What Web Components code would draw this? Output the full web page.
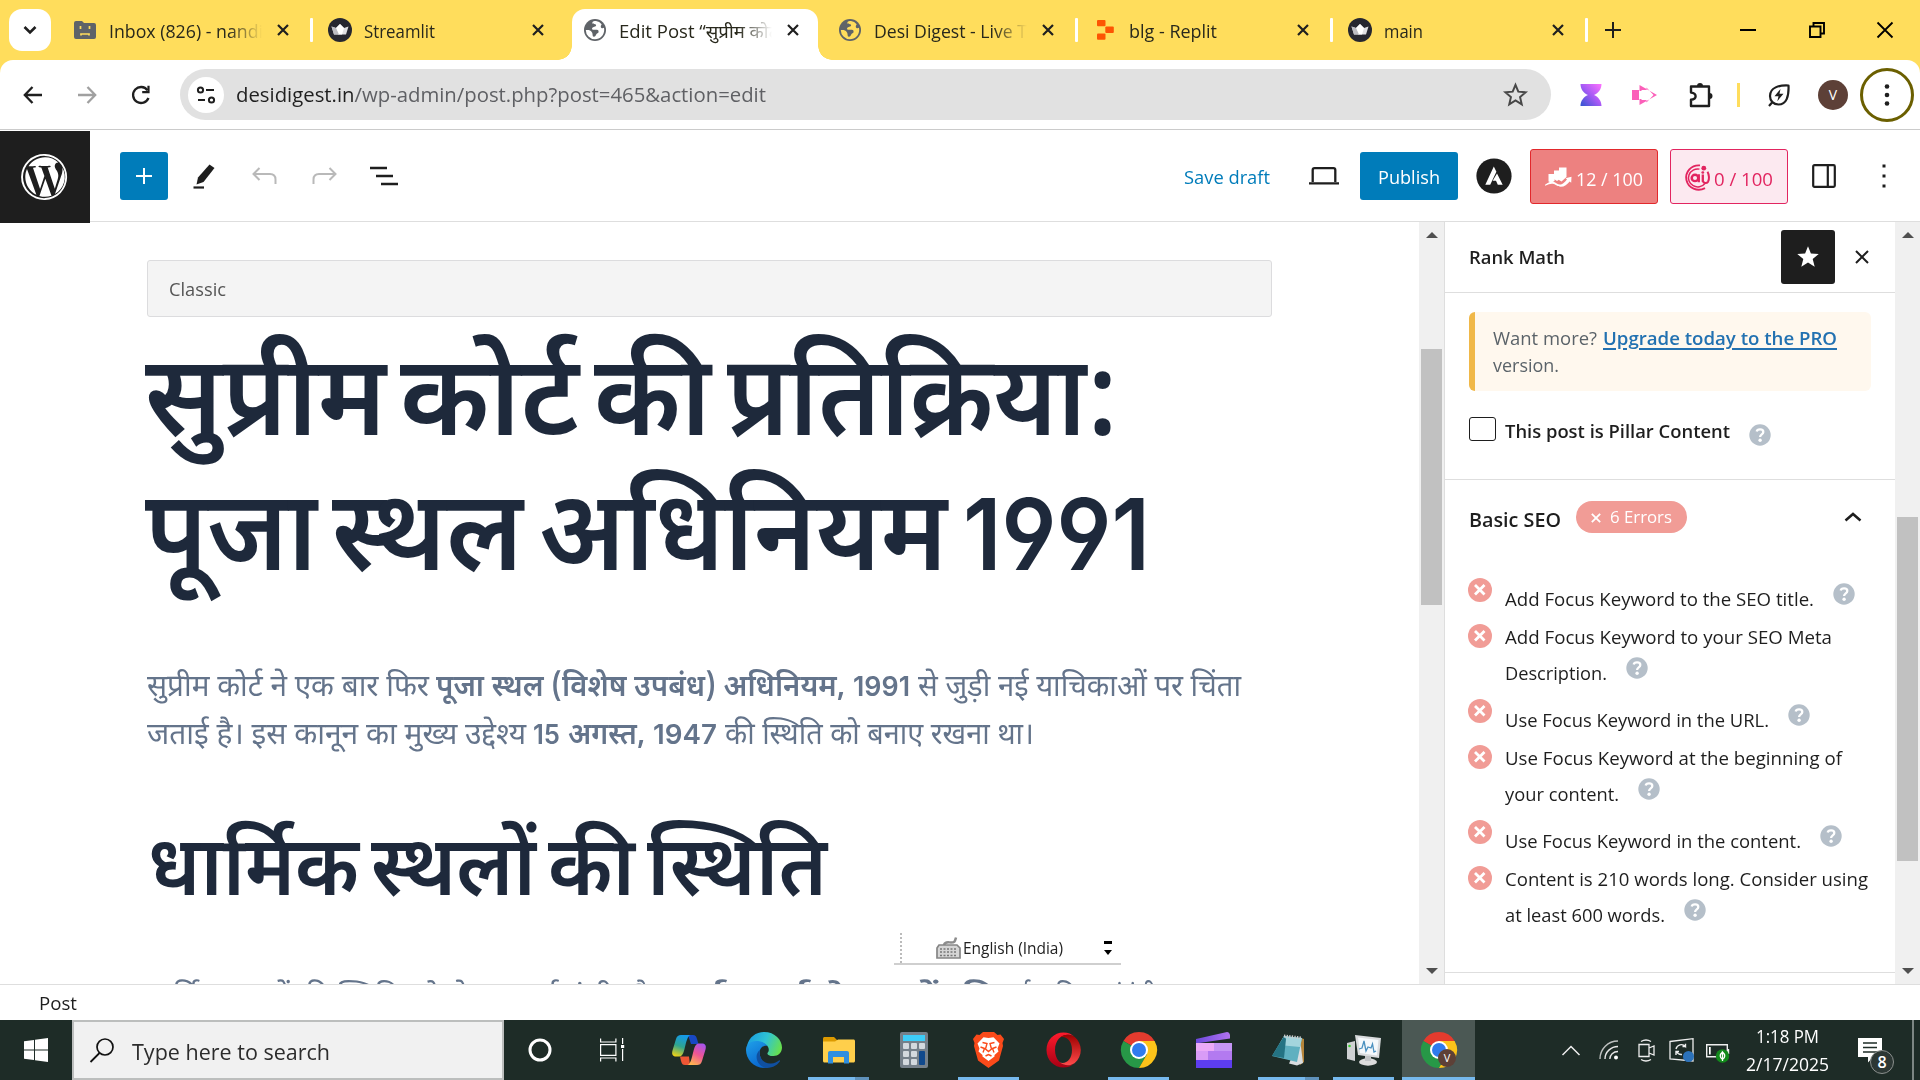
<!DOCTYPE html>
<html lang="en"><head><meta charset="utf-8"><title>Edit Post</title>
<style>
html,body{margin:0;height:100%;overflow:hidden;background:#fff}
body{font-family:"Open Sans","Noto Sans","Noto Sans Devanagari",sans-serif;color:#1e1e1e}
</style></head><body>
<desk-top></desk-top>
<script>
const ICONS={
chev:['0 0 16 16','<path d="M2.500 5l5.500 5.500L13.500 5" fill="none" stroke="#1f1f1f" stroke-width="2.600"/>'],
folder:['0 0 22 18','<path d="M0 2a2 2 0 0 1 2-2h6l2 2h10a2 2 0 0 1 2 2v12a2 2 0 0 1-2 2H2a2 2 0 0 1-2-2z" fill="#5f6368"/><path d="M6.500 5v3M15.500 5v3M7 14.500v-1.500h8v1.500" fill="none" stroke="#ffdd5c" stroke-width="1.700"/>'],
x:['0 0 12 12','<path d="M1 1l10 10M11 1L1 11" stroke="currentColor" stroke-width="2.200"/>'],
thinx:['0 0 14 14','<path d="M1 1l12 12M13 1L1 13" stroke="currentColor" stroke-width="2"/>'],
crown:['0 0 24 24','<circle cx="12" cy="12" r="12" fill="#262730"/><path d="M3.500 8.500L8 10l4-4 4 4 4.500-1.500L18 16.500H6z" fill="#e0e0e3"/><path d="M12 6l4 4-2 6.500h-4L8 10z" fill="#fff"/><path d="M3.500 8.500L8 10l3 6.500H6z" fill="#bcbcc2"/>'],
globe:['0 0 24 24','<circle cx="12" cy="12" r="11" fill="#5f6368"/><path d="M13 3c-1.500 0-3.500.3-3.700 1.700-.2 1.300 1.500 1.300 3 1.500 1.300.3 1 1.600-.1 2.200-1.100.6-3.200.6-3.200 2 0 1.300 1.200 1.300 2.500 1.300h2.300c1.700 0 2 1.300 1.700 2.600-.3 1.200-1.800 1-2.300 2.200-.5 1.100-1 2.500-2.500 2.300-1.600-.3-.8-2.500-1.400-3.900-.6-1.300-2-2.600-3.500-2.900-1.200-.2-2.200-.1-3 0a9.300 9.300 0 0 0 9.200 9.300c5.200 0 9.200-4.200 9.200-9.300 0-.8-.1-1.500-.3-2.200-1 .6-2.500.6-3-.6-.4-1 .2-2 .8-2.900A9.200 9.200 0 0 0 13 3z" fill="var(--bg,#fff)"/>'],
replit:['0 0 17 20','<g fill="#fd5402"><rect width="8.500" height="6.300" rx="1"/><rect x="8.300" y="6.500" width="8.500" height="6.500" rx="1"/><rect y="13.400" width="8.500" height="6.300" rx="1"/></g>'],
plus:['0 0 16 16','<path d="M8 0v16M0 8h16" stroke="currentColor" stroke-width="2"/>'],
min:['0 0 16 16','<path d="M0 8h16" stroke="#000" stroke-width="2"/>'],
restore:['0 0 16 16','<path d="M1 4.500h10.500V15H1zM4.500 4.500V1H15v10.500h-3.500" fill="none" stroke="#000" stroke-width="1.900"/>'],
wx:['0 0 16 16','<path d="M.5.500l15 15M15.500.500l-15 15" stroke="#000" stroke-width="1.800"/>'],
back:['0 0 20 20','<path d="M19 10H2M9.500 2L1.800 10l7.700 8" fill="none" stroke="currentColor" stroke-width="2.300"/>'],
reload:['0 0 20 20','<path d="M17.500 13A8 8 0 1 1 16.500 5.200" fill="none" stroke="#1f1f1f" stroke-width="2.300"/><path d="M18.600.8v7.400h-7.400V6h5.200V.8z" fill="#1f1f1f"/>'],
tune:['0 0 20 20','<g fill="none" stroke="#1f1f1f" stroke-width="2"><circle cx="4.500" cy="5" r="2.600"/><path d="M10 5h8M2 15h7"/><circle cx="15.500" cy="15" r="2.600"/></g>'],
star:['0 0 24 24','<path d="M12 2.800l2.700 6.500 7 .6-5.300 4.600 1.600 6.900-6-3.700-6 3.700 1.600-6.900-5.300-4.600 7-.6z" fill="none" stroke="#474747" stroke-width="1.900"/>'],
hour:['0 0 22 22','<defs><linearGradient id="a" x1="1" y1="0" x2="0" y2="1"><stop offset="0" stop-color="#ff72ff"/><stop offset=".5" stop-color="#a65af5"/><stop offset="1" stop-color="#3055d0"/></linearGradient></defs><path d="M.5 0h21c0 5-3 9-7.500 11 4.500 2 7.500 6 7.500 11H.5c0-5 3-9 7.500-11C3.500 9 .5 5 .5 0z" fill="url(#a)"/>'],
pinkp:['0 0 25 20','<path d="M0 5h7v10H0z" fill="#fb5fb9"/><path d="M7.500 6V0L25 10 7.500 20v-6l2 0v1h5v2.500l7-7.500-7-7.500V5h-5v1z" fill="#fb5fb9"/>'],
puzzle:['0 0 26 26','<path d="M4 4.500h18V24H4v-6.200c3.700-.4 4.600-1.900 4.600-3.600S7.700 11 4 10.600z" fill="none" stroke="#1f1f1f" stroke-width="2.400" stroke-linejoin="round"/><path d="M10 4a3 3 0 0 1 6 0zM22.500 11a3 3 0 0 1 0 6z" fill="#1f1f1f"/>'],
leaf:['0 0 24 24','<path d="M21.500 2.500C12 2 3 4.500 3 13c0 5 3.500 8.500 8.500 8.500 8 0 10.500-8 10-19zM2 23l3.500-4" fill="none" stroke="#1f1f1f" stroke-width="2.200" stroke-linejoin="round"/><path d="M13.500 6l-6 7.200h4l-1.200 5 6.200-7.400h-4z" fill="#1f1f1f"/>'],
dots:['0 0 6 24','<g fill="currentColor"><circle cx="3" cy="3.500" r="2.300"/><circle cx="3" cy="12" r="2.300"/><circle cx="3" cy="20.500" r="2.300"/></g>'],
wp:['0 0 122.500 122.500','<g fill="#fff"><path d="M8.700 61.300c0 20.800 12.100 38.700 29.600 47.300l-25-68.700c-3 6.500-4.600 13.700-4.600 21.400zM96.700 58.600c0-6.500-2.300-11-4.300-14.500-2.700-4.300-5.200-8-5.200-12.300 0-4.800 3.700-9.300 8.900-9.300h.7a52.400 52.400 0 0 0-35.500-13.800c-18.400 0-34.500 9.400-43.900 23.700 1.200 0 2.400.1 3.400.1 5.500 0 14-.7 14-.7 2.900-.2 3.200 4 .4 4.300 0 0-2.900.3-6 .5L48.100 93l11.500-34.500-8.200-22.400c-2.800-.2-5.500-.5-5.500-.5-2.800-.2-2.500-4.500.3-4.300 0 0 8.700.7 13.900.7 5.500 0 14-.7 14-.7 2.800-.2 3.200 4 .3 4.300 0 0-2.800.3-6 .5l19 56.500 5.200-17.500c2.300-7.200 4-12.400 4-16.800zM62.200 65.900l-15.800 45.800a52.600 52.600 0 0 0 32.300-.8l-.4-.7zM107.400 36c.2 1.700.4 3.500.4 5.400 0 5.300-1 11.300-4 18.800l-16 46.500a52.500 52.500 0 0 0 19.600-70.700z"/><path d="M61.300 0a61.300 61.300 0 1 0 0 122.500 61.300 61.300 0 0 0 0-122.500zm0 117.500a56.300 56.300 0 1 1 0-112.500 56.300 56.300 0 0 1 0 112.500z"/></g>'],
pencil:['0 0 22 25','<path d="M16.500.5l5 3.500L10.500 18 3.500 20.500 5 13.500z" fill="#1e1e1e"/><path d="M.5 23.500h10.500" stroke="#1e1e1e" stroke-width="2.200"/>'],
undo:['0 0 25 18','<path d="M7.500 1L1.500 7l6 6M1.500 7H18c3.500 0 5.500 2 5.500 5.500V17" fill="none" stroke="#b9b9b9" stroke-width="2"/>'],
list:['0 0 28 20','<path d="M0 2h17M6 10h17M11 18h17" stroke="#1e1e1e" stroke-width="2.400"/>'],
laptop:['0 0 30 18','<path d="M3.700 15V3c0-1 .8-1.800 1.800-1.800h19c1 0 1.800.8 1.800 1.800v12M0 16.300h30" fill="none" stroke="#1e1e1e" stroke-width="2.300"/>'],
astra:['0 0 36 36','<circle cx="18" cy="18" r="17.600" fill="#1e1e1e"/><path d="M17.800 8.500l2.600 5.300-6.200 12.900H9.300zM21 15.500l5.700 11.200h-4.900l-1.800-4h-3.300z" fill="#fff"/>'],
rank:['0 0 27 20','<path d="M3.500 7h6v7l-3 1.500-3-1zM9 3.500h6V12l-3 2-3-2zM14 .5h7.500V10l-5 4.500-2.500-1.500z" fill="#fff"/><path d="M0 17.800c4.500-2.800 6-3.800 8.500-3 2.500.8 4 2.700 6.500 2.700 3 0 5-2.800 7-5.300l-1.500-1 6-1.500-.3 6-1.500-1.200c-2.500 3-5.200 5.300-9 5.300-3.500 0-4.500-2-7-2.700-2.500-.8-4.700.2-8.700 1.600z" fill="#fff"/>'],
aic:['0 0 26 28','<g fill="none" stroke="#e22560"><path d="M16 1.500A12.600 12.600 0 1 0 21 25" stroke-width="1.900"/><path d="M23.500 8c1.700 3 2 8 .5 10.500-1.500 2-4.500 1.500-5.200-1" stroke-width="2"/><path d="M15.500 5.300a9.300 9.300 0 1 0 5.500 15" stroke-width="1.500"/><circle cx="11" cy="14.500" r="3.300" stroke-width="2.500"/><path d="M14.800 10.500v8.300M18.800 11v7.500" stroke-width="2.300"/></g><circle cx="19.800" cy="4.300" r="2.400" fill="#e22560"/><circle cx="18.800" cy="8.800" r="1.400" fill="#e22560"/>'],
side:['0 0 24 24','<path d="M2.500 1.200h19c.8 0 1.300.5 1.300 1.300v19c0 .8-.5 1.300-1.300 1.300h-19c-.8 0-1.300-.5-1.300-1.300v-19c0-.8.5-1.300 1.300-1.300zM15.800 1v22" fill="none" stroke="#1e1e1e" stroke-width="2.200"/>'],
sdots:['0 0 4 24','<path d="M.5.500h3v3h-3zM.5 10.500h3v3h-3zM.5 20.500h3v3h-3z" fill="#1e1e1e"/>'],
fstar:['0 0 22 22','<path d="M11 .3l2.900 7.300 7.800.5-6 5 2 7.700-6.700-4.300-6.700 4.300 2-7.700-6-5 7.800-.5z" fill="#fff"/>'],
up:['0 0 18 10','<path d="M1.500 8.500L9 2l7.500 6.500" fill="none" stroke="#1e1e1e" stroke-width="2.500"/>'],
err:['0 0 24 24','<circle cx="12" cy="12" r="12" fill="#f19c96"/><path d="M7 7l9.500 9.500M16.500 7L7 16.500" stroke="#fff" stroke-width="2.800"/>'],
help:['0 0 22 22','<circle cx="11" cy="11" r="10.700" fill="#b5bfc9"/><path d="M7.700 7.500C8.200 4.800 14.300 4.600 14.300 8c0 2.400-3.200 2.300-3.200 4.900" fill="none" stroke="#fff" stroke-width="2.300"/><circle cx="11.100" cy="16.300" r="1.700" fill="#fff"/>'],
kb:['0 0 25 22','<path d="M8 8c1-4 5-2.500 7-2.500 4 0 4-1.500 5-5" fill="none" stroke="#8d8d8d" stroke-width="2.500"/><path d="M3 8h18l3 3v10H1V11z" fill="#d5d5d5" stroke="#858585" stroke-width="1.700"/><path d="M4 12h17M4 15h17M4 18.500h17" stroke="#777" stroke-width="1.700" stroke-dasharray="2 1.500"/>'],
win:['0 0 24 24','<path d="M0 3.300l10-1.400v9.600H0zM11 1.700L24 0v11.500H11zM0 12.500h10v9.600L0 20.700zM11 12.500h13V24l-13-1.700z" fill="#fff"/>'],
mag:['0 0 24 25','<circle cx="15" cy="9" r="8" fill="none" stroke="#111" stroke-width="1.700"/><path d="M9.500 15L.5 24" stroke="#111" stroke-width="1.800"/>'],
cort:['0 0 24 24','<circle cx="12" cy="12" r="10" fill="none" stroke="#fff" stroke-width="3"/>'],
tview:['0 0 25 24','<path d="M.6.500V4h15.300V.500M.6 23.500V20h15.300v3.500M.6 6.600h15.300v10.700H.600zM22.600 0v6M22.600 11v12" fill="none" stroke="#fff" stroke-width="1.200"/><path d="M21 7h3.200v3H21z" fill="#fff"/>'],
copilot:['0 0 34 30','<defs><linearGradient id="c1" x1=".5" y1="0" x2=".2" y2="1"><stop offset="0" stop-color="#159ae8"/><stop offset=".5" stop-color="#2fa58f"/><stop offset="1" stop-color="#f3d414"/></linearGradient><linearGradient id="c2" x1=".8" y1="0" x2=".3" y2="1"><stop offset="0" stop-color="#a654ef"/><stop offset=".5" stop-color="#ee5594"/><stop offset="1" stop-color="#ffb44f"/></linearGradient></defs><path d="M16 0h5c2.500 0 3 1 4 4l1.500 5H19z" fill="#1848c4"/><path d="M18 30h-5c-2.500 0-3-1-4-4l-1-4.500h9z" fill="#ee5634"/><path d="M9 0h9.500c-3 1-4 6-6 14-1.500 6-3 7.500-6 7.500H4c-3.500 0-4.500-2.500-3.500-6L4 4c1-3 2.500-4 5-4z" fill="url(#c1)"/><path d="M25 30h-9.500c3-1 4-6 6-14 1.500-6 3-7.500 6-7.500H30c3.500 0 4.500 2.500 3.500 6L30 26c-1 3-2.500 4-5 4z" fill="url(#c2)"/>'],
edge:['0 0 36 36','<defs><linearGradient id="e1" x1="0" y1=".3" x2="1" y2=".6"><stop offset="0" stop-color="#1a9ee0"/><stop offset=".5" stop-color="#2fc3d5"/><stop offset="1" stop-color="#68e04c"/></linearGradient><linearGradient id="e2" x1="0" y1="0" x2=".5" y2="1"><stop offset="0" stop-color="#1fa0e8"/><stop offset="1" stop-color="#0a68d0"/></linearGradient></defs><path d="M1 14C3 5 10 0 18 0c11 0 18 8 18 15.500 0 5-4 8.500-8.500 8.500-4 0-6.500-1.500-6-3 2-2 1.500-5.500-.5-7.500-4-3.500-14-3.500-20 .5z" fill="url(#e1)"/><path d="M0 18c0-5.500 4-9 10-9 5.500 0 9.500 2 11.500 5-3-1-6.500 1-7.500 4-1.500 6 2 13 8 17.500C9 38 0 28 0 18z" fill="url(#e2)"/><path d="M14 18c-2 7 3.500 14 11 13.500 3.500 0 6-1.500 8-3 .8-.5 1.300.2.800 1C30 34.500 25 36 19 36 10 33 8 22 14 18z" fill="#1050a0"/>'],
expl:['0 0 32 27','<path d="M0 1.500C0 .7.700 0 1.500 0H11l3 3v4H0z" fill="#dc9a00"/><path d="M0 4.500h12l3-2h15.500c.8 0 1.500.7 1.500 1.500v20c0 .8-.7 1.500-1.500 1.500h-29C.7 25.500 0 24.800 0 24z" fill="#ffcf4b"/><path d="M5 26.500V16c0-1.200.8-2 2-2h17c1.200 0 2 .8 2 2v10.500h-5V20h-11v6.500z" fill="#2f8fe0"/>'],
calc:['0 0 28 36','<rect width="28" height="36" rx="2" fill="#75808a"/><rect x="3" y="3" width="22" height="6" fill="#3dcdf8"/><g fill="#d3d9de"><rect x="3" y="11" width="6" height="6" rx="1"/><rect x="11" y="11" width="6" height="6" rx="1"/><rect x="19" y="11" width="6" height="6" rx="1"/><rect x="3" y="19" width="6" height="6" rx="1"/><rect x="11" y="19" width="6" height="6" rx="1"/><rect x="3" y="27" width="6" height="6" rx="1"/><rect x="11" y="27" width="6" height="6" rx="1"/></g><rect x="19" y="19" width="6" height="14" rx="1" fill="#10498c"/>'],
brave:['0 0 31 36','<path d="M10 0h11l3.500 3 3-.5L31 7l-1.500 4 .5 3-4 14.500L15.500 36 5 28.500 1 14l.5-3L0 7l3.500-4.500 3 .5z" fill="#fb4a1a"/><path d="M15.500 6l5-.8 6 6.300-2 5 1 3-4 3.500 0 1.500-6 4.500-6-4.500 0-1.500-4-3.500 1-3-2-5 6-6.300z" fill="#fff"/><path d="M9.500 10.500l4.500 1-1.500 5.500 3 2.500 3-2.500-1.500-5.500 4.500-1M7.500 15l4 1.500-1.500 4M23.500 15l-4 1.500 1.500 4M12.500 24l3-1.500 3 1.500" fill="none" stroke="#fb4a1a" stroke-width="1.400"/>'],
opera:['0 0 35 36','<defs><linearGradient id="o1" x1="0" y1="0" x2="0" y2="1"><stop offset="0" stop-color="#ff1b2d"/><stop offset="1" stop-color="#a70014"/></linearGradient><linearGradient id="o2" x1="0" y1="0" x2="0" y2="1"><stop offset="0" stop-color="#9c0000"/><stop offset="1" stop-color="#ff4b4b"/></linearGradient></defs><path d="M17.500.5C8 .5.500 8 .5 18S8 35.500 17.500 35.500c4.500 0 8-1.500 11-4.300-9 5.500-19.500-.7-19.500-13.200S19.500-.7 28.500 4.800C25.500 2 22 .5 17.500.5z" fill="url(#o1)"/><path d="M14 5.500c4.500-3.500 10-3.500 14.500-.7 4 3.500 6.300 8 6.300 13.200s-2.300 9.700-6.300 13.200c-4.500 2.800-10 2.800-14.500-.7 6 2 12-3 12-12.500S20 3.500 14 5.500z" fill="url(#o2)"/>'],
chrome:['0 0 36 36','<path d="M18 18L2.400 9A18 18 0 0 1 33.600 9z" fill="#e33b2e"/><path d="M18 18l7.800 4.500L18 36A18 18 0 0 1 2.400 9z" fill="#279847"/><path d="M18 9h15.600A18 18 0 0 1 18 36l7.800-13.500z" fill="#fcc31a"/><circle cx="18" cy="18" r="9" fill="#fff"/><circle cx="18" cy="18" r="7" fill="#2f7bee"/>'],
clip:['0 0 36 36','<defs><linearGradient id="k" x1="0" y1="0" x2="1" y2="0"><stop offset="0" stop-color="#6c48dd"/><stop offset="1" stop-color="#b173ee"/></linearGradient></defs><path d="M0 7L31 0c1.500 0 2.500 1 3 3v3.500L3 11H0z" fill="url(#k)"/><rect y="11" width="36" height="25" rx="1.500" fill="#b37af0"/><path d="M0 11h18v8H0z" fill="#ebaaf8"/><path d="M18 11h18v8H18z" fill="#c596f5"/><path d="M0 19h12v9H0z" fill="#d99cf7"/><path d="M0 28h36v6.500a1.500 1.500 0 0 1-1.500 1.500h-33A1.500 1.500 0 0 1 0 34.500z" fill="#5d3df0"/>'],
note:['0 0 33 32','<path d="M29 4l3 1v23l-4 3z" fill="#b5853a"/><path d="M28 5l3 24-6 2.500-8-2z" fill="#d8dde0"/><path d="M12 2l18 2-5 24L0 22z" fill="#5fb0c0"/><path d="M12 2l18 2-2 9L7 11z" fill="#a3d5dd"/><path d="M0 22l12-20 2 3-2 19z" fill="#247383"/><path d="M12 2l18 2" stroke="#ccc" stroke-width="3" stroke-dasharray="1.300 1.300"/>'],
mon:['0 0 34 31','<path d="M0 8l8-2v20l-8-2z" fill="#cfd1d3"/><circle cx="2.500" cy="11" r="1.300" fill="#3bd02f"/><path d="M8 0l26 3-2 20-21-3z" fill="#d9dbdd"/><path d="M11 2.500l20.500 2.500-1.700 15.500L13 18z" fill="#f4f8fb"/><path d="M12 14l3-1 2-7 2 10 2-4 3 1 1.500-4 1.500 8 2-1" fill="none" stroke="#4a90bf" stroke-width="1.300"/><ellipse cx="21" cy="27" rx="9" ry="3.700" fill="#dcdcdc"/><path d="M18 21h6v5h-6z" fill="#c3c5c7"/>'],
tup:['0 0 18 11','<path d="M.5 10L9 1.500 17.500 10" fill="none" stroke="#eee" stroke-width="1.500"/>'],
wifi:['0 0 20 20','<g fill="none" stroke="#e6e6e6" stroke-width="1.400"><path d="M1 19C1 9 9 1 19 1" opacity=".8"/><path d="M6 19C6 12 12 6.500 19 6.500M10.800 19c0-4 3.500-7.500 8.200-7.500"/></g><circle cx="17" cy="17.500" r="2" fill="#fff"/>'],
cam:['0 0 17 23','<path d="M1 5.500h10v12H1zM11 9l5-2v9l-5-2M3 2.500c3-1.800 7-1.800 10 0M3 20.500c3 1.800 7 1.800 10 0" fill="none" stroke="#eee" stroke-width="1.300"/>'],
sync:['0 0 25 24','<path d="M1 3.500L24 .7V23L1 21z" fill="none" stroke="#eee" stroke-width="1.300"/><path d="M7 11a5.500 5.500 0 0 1 9.500-2.500V5.800M16.500 8.500h-3M7.500 13.500A5.500 5.500 0 0 0 13 16.500M7 17v-3.500h3" fill="none" stroke="#eee" stroke-width="1.400"/><circle cx="19.500" cy="18.500" r="5.500" fill="#2c72ba"/>'],
batt:['0 0 24 19','<path d="M.7.700h20.600v12H.700zM22.500 5v5" fill="none" stroke="#eee" stroke-width="1.400"/><path d="M3 3h1.700v7.500H3z" fill="#fff"/><circle cx="16.500" cy="12" r="6.700" fill="#128a1b"/><path d="M16.500 8c-3 2.500-3 5.500 0 7.500 3-2 3-5 0-7.500v9" fill="none" stroke="#fff" stroke-width="1.300"/>'],
chat:['0 0 24 25','<path d="M0 0h24v19H15l-5 5.500V19H0z" fill="#fff"/><path d="M5 5h14M5 9.500h14M5 14h14" stroke="#1e2c27" stroke-width="1.300"/>'],
tri:['0 0 12 6','<path d="M0 6l6-6 6 6z" fill="#505050"/>']
};
class El extends HTMLElement{
 constructor(){super();this.attachShadow({mode:'open'}).innerHTML='<style>*{box-sizing:border-box}'+this.constructor.css+'</style>'+this.view()}
 view(){return '<slot></slot>'}
}
El.css='';
const def=(n,c)=>customElements.define(n,c);
def('fit-text',class extends El{
 static css=':host{display:inline-block;white-space:nowrap;flex:none;text-align:left}span{display:inline-block;transform-origin:0 50%}';
 view(){return '<span><slot></slot></span>'}
 connectedCallback(){const w=+this.getAttribute('w'),s=this.shadowRoot.querySelector('span');if(w){const n=s.offsetWidth;this.style.width=w+'px';if(n){s.style.transform='scaleX('+w/s.getBoundingClientRect().width+')';s.style.marginRight=(w-n)+'px'}}}
});
def('ui-icon',class extends El{
 static css=':host{display:block;flex:none;line-height:0}svg{display:block;width:100%;height:100%;overflow:visible}';
 connectedCallback(){const i=ICONS[this.getAttribute('name')],v=i[0].split(' ');this.style.width=(this.getAttribute('w')||v[2])+'px';this.style.height=(this.getAttribute('h')||v[3])+'px';
 this.shadowRoot.innerHTML='<style>'+this.constructor.css+'</style><svg preserveAspectRatio="none" viewBox="'+i[0]+'">'+i[1]+'</svg>'}
});
const ic=(n,ml=0,w='',h='',st='')=>`<ui-icon name="${n}" ${w?`w="${w}"`:''} ${h?`h="${h}"`:''} style="margin-left:${ml}px;${st}"></ui-icon>`;
const ft=(t,w,ml=0,st='')=>`<fit-text w="${w}" style="margin-left:${ml}px;${st}">${t}</fit-text>`;
def('browser-tab',class extends El{
 static css=`:host{display:flex;width:255px;height:60px;flex:none;padding-top:9px;font-size:17.300px;color:#28281c;--bg:#ffdd5c}
 .t{display:flex;align-items:center;flex:1;height:42px}
 .i{width:56px;display:flex;justify-content:center}.n{width:153px;margin-left:-4px;overflow:hidden;line-height:30px;padding-top:4px}
 .f{-webkit-mask-image:linear-gradient(90deg,#000 78%,transparent 100%)}
 .c{margin-left:15px;color:#1f1f1f}.s{width:3px;height:24px;background:#fff;margin:9px -1px 0 0;border-radius:1px}
 :host([active]){--bg:#fff}:host([active]) .t{background:#fff;border-radius:13px 13px 0 0;height:51px;margin:0 4px 0 5px;padding:0 0 9px;position:relative}
 :host([active]) .i{width:46px}:host([active]) .n{margin-left:1px}
 :host([active]) .t:before,:host([active]) .t:after{content:"";position:absolute;bottom:0;width:14px;height:14px;left:-14px;background:radial-gradient(circle at 0 0,transparent 13.500px,#fff 14px)}
 :host([active]) .t:after{left:auto;right:-14px;background:radial-gradient(circle at 100% 0,transparent 13.500px,#fff 14px)}`;
 view(){const g=a=>this.getAttribute(a);return `<div class="t"><div class="i">${ic(g('icon'))}</div><div class="n ${g('fade')!==null?'f':''}">${ft(g('label'),g('tw'))}</div><ui-icon class="c" name="x"></ui-icon></div>${g('sep')!==null?'<div class="s"></div>':''}`}
});
def('tab-strip',class extends El{
 static css=':host{display:flex;height:60px;background:#ffdd5c;align-items:flex-start}.m{width:42px;height:42px;border-radius:13px;background:#fff;margin:9px 6px 0 9px;display:flex;align-items:center;justify-content:center}.r{display:flex;align-items:center;height:60px}';
 view(){return `<div class="m">${ic('chev',0,16,16)}</div>
 <browser-tab icon="folder" label="Inbox (826) - nandi" tw="154" fade sep></browser-tab>
 <browser-tab icon="crown" label="Streamlit" tw="71"></browser-tab>
 <browser-tab icon="globe" label="Edit Post “सुप्रीम कोर्ट" tw="159" fade active></browser-tab>
 <browser-tab icon="globe" label="Desi Digest - Live T" tw="153" fade sep></browser-tab>
 <browser-tab icon="replit" label="blg - Replit" tw="88" sep></browser-tab>
 <browser-tab icon="crown" label="main" tw="39" sep></browser-tab>
 <div class="r">${ic('plus',18,16,16)}${ic('min',119)}${ic('restore',53)}${ic('wx',52)}</div>`}
});
def('browser-toolbar',class extends El{
 static css=`:host{display:block;background:#ffdd5c;height:71px;color:#1f1f1f}.b{display:flex;box-sizing:border-box;align-items:center;height:70px;background:#fff;border-radius:13px 13px 0 0;border-bottom:1px solid #cbcbcb}
 .o{display:flex;align-items:center;width:1371px;height:51px;border-radius:26px;background:#e1e1e1;margin-left:29px;font-size:20.300px}.c{width:36px;height:36px;border-radius:50%;background:#fff;margin-left:8px;display:flex;align-items:center;justify-content:center}
 .u{flex:1;margin-left:12px;color:#5f6064;margin-top:-2px}.u b{font-weight:400;color:#1f1f1f}.s{width:3px;height:24px;background:#ffdd5c}
 .v{width:30px;height:30px;border-radius:50%;background:#5d4037;color:#fff;font-size:14px;display:flex;align-items:center;justify-content:center;margin-left:27px}
 .m{width:54px;height:54px;border-radius:50%;border:3px solid #6b5f00;display:flex;align-items:center;justify-content:center;margin-left:12px}.bg{background:#fff}`;
 view(){return `<div class="b">${ic('back',23,20,20)}${ic('back',34,20,20,'transform:scaleX(-1);color:#a0a0a0')}${ic('reload',34,20,20)}
 <div class="o"><div class="c">${ic('tune',0,20,20)}</div><div class="u">${ft('<b>desidigest.in</b>/wp-admin/post.php?post=465&amp;action=edit',530)}</div>${ic('star',0,25,25,'margin-right:23px')}</div>
 ${ic('hour',29)}${ic('pinkp',30)}${ic('puzzle',30)}<div class="s" style="margin-left:24px"></div>${ic('leaf',27)}<div class="v">V</div><div class="m">${ic('dots')}</div></div><div class="bg" style="height:1px"></div>`}
});
def('editor-header',class extends El{
 static css=`:host{display:flex;box-sizing:border-box;align-items:center;height:91px;padding-bottom:1px;background:#fff;box-shadow:inset 0 -1px #dedede;font-size:18.500px}
 .w{width:90px;height:92px;margin-bottom:-2px;background:#1e1e1e;display:flex;align-items:center;justify-content:center;flex:none;position:relative}
 .p{width:48px;height:48px;background:#007cba;color:#fff;border-radius:3px;margin-left:30px;display:flex;align-items:center;justify-content:center}
 .pub{width:98px;margin-left:22px}.g{flex:1}.q{display:flex;align-items:center;height:55px;border-radius:3px;color:#fff;padding-left:14px;font-weight:500;padding-top:2px;font-size:19px}
 .q fit-text{padding-top:3px}`;
 view(){return `<div class="w">${ic('wp',0,46,46)}</div><div class="p">${ic('plus',0,16,16)}</div>${ic('pencil',25)}${ic('undo',37)}${ic('undo',35,'','','transform:scaleX(-1)')}${ic('list',33)}<div class="g"></div>
 ${ft('Save draft',86,0,'color:#007cba')}${ic('laptop',39)}<div class="p pub" style="margin-left:21px">${ft('Publish',62)}</div>${ic('astra',18)}
 <div class="q" style="margin-left:18px;width:128px;background:#ed8180;border:1px solid #e2282c">${ic('rank')}${ft('12 / 100',67,4)}</div>
 <div class="q" style="margin-left:12px;width:118px;background:#fce9f0;border:1px solid #e22560;color:#e22560;padding-left:13px">${ic('aic',0,26,27)}${ft('0 / 100',59,4)}</div>
 ${ic('side',24)}${ic('sdots',46,'','','margin-right:34px')}`}
});
def('scroll-bar',class extends El{
 static css=':host{display:flex;box-sizing:border-box;flex-direction:column;align-items:center;width:25px;background:#f0f0f0;height:762px;flex:none;padding:10px 0 10px}.t{width:21px;background:#c1c1c1}.g{flex:1}';
 view(){return `${ic('tri')}<div class="t" style="margin-top:${this.getAttribute('top')-16}px;height:${this.getAttribute('len')}px"></div><div class="g"></div>${ic('tri',0,'','','transform:scaleY(-1)')}`}
});
def('text-line',class extends El{static css=':host{display:flex;white-space:nowrap;width:max-content;align-items:baseline}'});
def('post-canvas',class extends El{
 static css=`:host{display:block;box-sizing:border-box;flex:1;height:762px;overflow:hidden;padding:38px 0 0 147px;font-family:"Noto Sans Devanagari","Nirmala UI","Noto Sans",sans-serif;color:#64748b;font-size:31px}
 .c{width:1125px;height:57px;border:1px solid #dcdcde;border-radius:3px;background:#f4f4f4;color:#555;font:18.500px/55px "Open Sans",sans-serif;padding-left:21px}
 h1,h2{margin:0;color:#1e293b;font-weight:600}h1{margin-top:23px;font-size:113px;line-height:135px}h2{font-size:83px;line-height:100px;margin-top:64px}
 .n{font-family:Inter,sans-serif;font-size:99px;line-height:100px;font-feature-settings:"cv04"}p{margin:0;line-height:48px}.p1{margin-top:55px}.p2{margin-top:51px}b{font-weight:600}i{font:600 27px/27px Inter,sans-serif}`;
 view(){return `<div class="c">${ft('Classic',57)}</div>
 <h1><text-line>${ft('सुप्रीम',241,-2)} ${ft('कोर्ट',179,14)} ${ft('की',117,15)} ${ft('प्रतिक्रिया:',392,16)}</text-line><text-line>${ft('पूजा',172,-2)} ${ft('स्थल',191,15)} ${ft('अधिनियम',408,16)} <fit-text class="n" w="187" style="margin-left:16px">1991</fit-text></text-line></h1>
 <p class="p1"><text-line>${ft('सुप्रीम कोर्ट ने एक बार फिर',282)} ${ft('<b>पूजा स्थल (विशेष उपबंध) अधिनियम,</b>',409,7)} ${ft('<i>1991</i>',57,8)} ${ft('से जुड़ी नई याचिकाओं पर चिंता',323,8)}</text-line>
 <text-line>${ft('जताई है। इस कानून का मुख्य उद्देश्य',379)} ${ft('<i>15</i>',27,7)} ${ft('<b>अगस्त,</b>',77,8)} ${ft('<i>1947</i>',64,8)} ${ft('की स्थिति को बनाए रखना था।',309,8)}</text-line></p>
 <h2><text-line>${ft('धार्मिक',211,1)} ${ft('स्थलों',165,12)} ${ft('की',87,12)} ${ft('स्थिति',180,12)}</text-line></h2>
 <p class="p2"><text-line>${ft('धार्मिक स्थलों की स्थिति को लेकर चर्चा गंभीर है।',514)} ${ft('<b>पूर्व कार्य के पक्षों की</b>',320,15)} ${ft('नई याचिका संबंधी',150,10)}</text-line></p>`}
});
def('lang-bar',class extends El{
 static css=':host{position:absolute;left:894px;top:932px;width:227px;height:33px;box-sizing:border-box;background:#fff;border-bottom:2px solid #cfcfcf;display:flex;align-items:center;font:17px "Open Sans",sans-serif;color:#222}.d{border-left:2px dotted #bbb;height:30px;margin-left:6px}.a{margin-left:41px;width:8px;display:flex;flex-direction:column;gap:6px}.a i{height:3px;background:#000}.a b{border:4px solid transparent;border-top:5px solid #000;border-bottom:0}';
 view(){return `<div class="d"></div>${ic('kb',34)}${ft('English (India)',100,2)}<div class="a"><i></i><b></b></div>`}
});
def('seo-check',class extends El{
 static css=`:host{display:flex;height:47px;align-items:flex-start}:host([two]){height:74px}.e{margin:5px 13px 0 -1px}:host([two]) .e{margin-top:4px}.l{display:flex;line-height:36px;height:36px}.b{padding-top:8px}:host([two]) .b{padding-top:0;margin-top:-1px}`;
 view(){const g=a=>this.getAttribute(a),two=g('two');return `<ui-icon class="e" name="err"></ui-icon><div class="b"><div class="l">${ft(g('one'),g('w1'))}${two?'':ic('help',19,'','','margin-top:2px')}</div>${two?`<div class="l">${ft(two,g('w2'))}${ic('help',19,'','','margin-top:2px')}</div>`:''}</div>`}
});
def('rank-panel',class extends El{
 static css=`:host{display:block;box-sizing:border-box;width:451px;height:762px;border-left:1px solid #dedede;overflow:hidden;flex:none;font-size:18.500px;color:#1e1e1e}
 .h{display:flex;align-items:center;height:71px;border-bottom:1px solid #dedede;padding-left:24px;font-weight:600}.h fit-text{margin-top:-2px}.g{flex:1}
 .s{width:54px;height:54px;background:#1e1e1e;border-radius:3px;display:flex;align-items:center;justify-content:center}
 .n{margin:19px 24px 0;width:402px;height:79px;border-left:6px solid #f0b849;border-radius:6px;background:#fff8ee;padding:12px 0 0 18px;line-height:27px;color:#5b6369}
 u{color:#2271b1;font-weight:600;text-decoration-thickness:2px;text-underline-offset:3px}
 .k{display:flex;align-items:center;height:89px;padding:0 0 10px 24px;border-bottom:1px solid #dedede;font-weight:600}.k i{width:27px;height:24px;border:1.500px solid #1e1e1e;border-radius:3px;margin-top:-2px}
 .t{display:flex;align-items:center;height:93px;padding:0 0 17px 24px}.p{display:flex;align-items:center;width:111px;height:32px;border-radius:16px;background:#f19c96;color:#fff;margin-left:15px;padding-left:15px;font-size:16.500px;margin-top:-2px}
 .l{padding-left:24px;height:400px;border-bottom:1px solid #dedede}`;
 view(){return `<div class="h">${ft('Rank Math',96)}<div class="g"></div><div class="s">${ic('fstar',0,22,22)}</div>${ic('thinx',20,14,14,'margin-right:26px')}</div>
 <div class="n"><text-line>${ft('Want more?',104)} ${ft('<u>Upgrade today to the PRO</u>',234,6)}</text-line>${ft('version.',66)}</div>
 <div class="k"><i></i>${ft('This post is Pillar Content',225,9)}${ic('help',19,'','','margin-top:9px')}</div>
 <div class="t">${ft('Basic SEO',92,0,'font-size:20px;font-weight:600;padding-top:3px')}<div class="p">${ic('x',0,10,10,'margin-top:2px')}${ft('6 Errors',62,9,'margin-top:-1px')}</div>${ic('up',157,18,10,'margin-top:-3px')}</div>
 <div class="l"><seo-check one="Add Focus Keyword to the SEO title." w1="309"></seo-check>
 <seo-check one="Add Focus Keyword to your SEO Meta" w1="327" two="Description." w2="102"></seo-check>
 <seo-check one="Use Focus Keyword in the URL." w1="264"></seo-check>
 <seo-check one="Use Focus Keyword at the beginning of" w1="337" two="your content." w2="114"></seo-check>
 <seo-check one="Use Focus Keyword in the content." w1="296"></seo-check>
 <seo-check one="Content is 210 words long. Consider using" w1="363" two="at least 600 words." w2="160"></seo-check></div>`}
});
def('task-item',class extends El{
 static css=`:host{display:flex;width:75px;height:60px;flex:none;align-items:center;justify-content:center;position:relative}:host([run]):after{content:"";position:absolute;left:7px;width:61px;bottom:0;height:3px;background:#76b9ed}:host([multi]):after{background:linear-gradient(90deg,#76b9ed 47px,#5f92bb 47px)}:host([active]){width:73px;margin-left:1px;background:#4b5854}:host([active]):after{left:0;width:73px}span{position:absolute;left:36px;top:29px;width:18px;height:18px;border-radius:50%;background:#5d4037;color:#fff;font:11px/18px "Open Sans",sans-serif;text-align:center}`;
 view(){return ic(this.getAttribute('icon'))+(this.hasAttribute('active')?'<span>V</span>':'')}
});
def('task-bar',class extends El{
 static css=`:host{display:flex;height:60px;background:#1e2c27;align-items:center;color:#fff;font-size:17.500px}.w{width:72px;display:flex;justify-content:center}
 .s{width:432px;height:60px;background:#f1f1f1;border:2px solid #bcbebd;display:flex;align-items:center;color:#2c2c2c;font-size:21px;padding-left:16px}.s fit-text{margin-top:3px}.g{flex:1}
 .c{display:flex;flex-direction:column;align-items:center;line-height:28px;width:84px;margin-left:15px}
 .n{position:relative;margin:0 30px 0 29px}.n b{position:absolute;left:12px;top:12px;width:24px;height:24px;border-radius:50%;background:#2c3734;border:1px solid #8b908e;font:600 16px/22px "Open Sans",sans-serif;text-align:center}.d{width:2px;height:60px;background:#7d8683;margin-right:6px}`;
 view(){return `<div class="w">${ic('win')}</div><div class="s">${ic('mag')}${ft('Type here to search',198,18)}</div>
 <task-item icon="cort" style="width:72px"></task-item><task-item icon="tview" style="width:73px;margin-right:2px"></task-item>
 <task-item icon="copilot"></task-item><task-item icon="edge"></task-item><task-item icon="expl" run multi></task-item><task-item icon="calc"></task-item><task-item icon="brave" run></task-item><task-item icon="opera"></task-item><task-item icon="chrome" run></task-item><task-item icon="clip"></task-item><task-item icon="note" run multi></task-item><task-item icon="mon" run></task-item><task-item icon="chrome" run active></task-item>
 <div class="g"></div>${ic('tup')}${ic('wifi',19)}${ic('cam',19)}${ic('sync',14)}${ic('batt',12,'','','margin-top:6px')}
 <div class="c">${ft('1:18 PM',63)}${ft('2/17/2025',83)}</div><div class="n">${ic('chat')}<b>8</b></div><div class="d"></div>`}
});
def('desk-top',class extends El{
 static css=`:host{display:flex;flex-direction:column;width:1920px;height:1080px;background:#fff}.m{display:flex;height:762px}.f{height:36px;border-top:1px solid #dedede;font-size:18.500px;line-height:36px;padding-left:39px}`;
 view(){return `<tab-strip></tab-strip><browser-toolbar></browser-toolbar><editor-header></editor-header>
 <div class="m"><post-canvas></post-canvas><scroll-bar top="127" len="256"></scroll-bar><rank-panel></rank-panel><scroll-bar top="295" len="344"></scroll-bar></div>
 <div class="f">${ft('Post',38)}</div><task-bar></task-bar><lang-bar></lang-bar>`}
});
</script></body></html>
